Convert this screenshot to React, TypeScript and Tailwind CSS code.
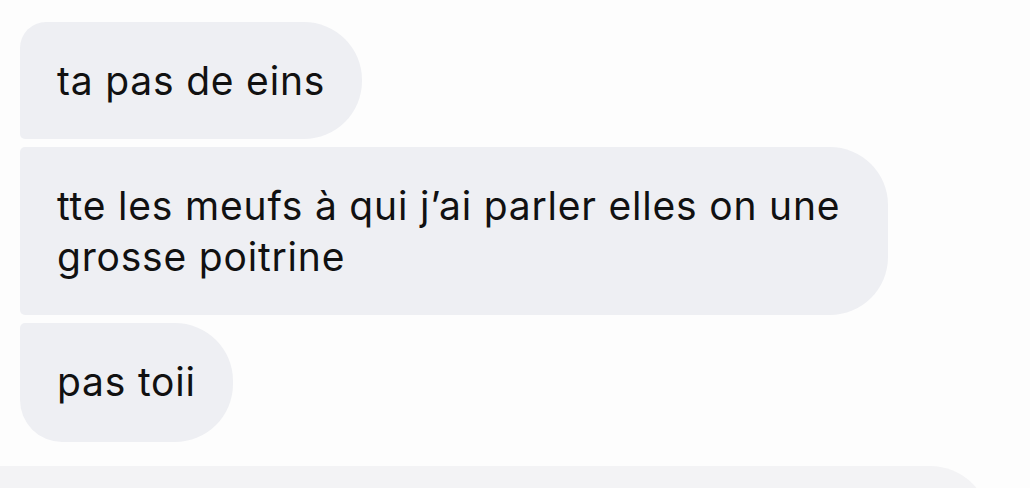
const messages = [
  { id: 1, text: 'ta pas de eins', shape: 'rounded-tl-[26px] rounded-bl-[5px]' },
  { id: 2, text: 'tte les meufs à qui j\u2019ai parler elles on une grosse poitrine', shape: 'rounded-tl-[5px] rounded-bl-[5px]' },
  { id: 3, text: 'pas toii', shape: 'rounded-tl-[5px] rounded-bl-[42px] pb-[35px]' },
];

function Bubble({ text, shape }: { text: string; shape: string }) {
  return (
    <div
      className={`max-w-[868px] bg-[#eeeff3] rounded-r-[58px] pl-[37px] pr-[37px] py-[33px] text-[39px] leading-[51px] text-[#111] tracking-[0.8px] ${shape}`}
      style={{ fontFamily: 'Inter, "Noto Sans", sans-serif' }}
    >
      {text}
    </div>
  );
}

export default function App() {
  return (
    <div className="w-[1030px] h-[488px] bg-[#fdfdfd] overflow-hidden flex flex-col">
      <div className="flex flex-col items-start gap-[8px] pl-[20px] pt-[22px]">
        {messages.map(m => (
          <Bubble key={m.id} text={m.text} shape={m.shape} />
        ))}
      </div>
      {/* next message, cut off by the bottom edge */}
      <div className="mt-[24px] w-[990px] h-[80px] bg-[#f3f3f5] rounded-tr-[60px] shrink-0" />
    </div>
  );
}
